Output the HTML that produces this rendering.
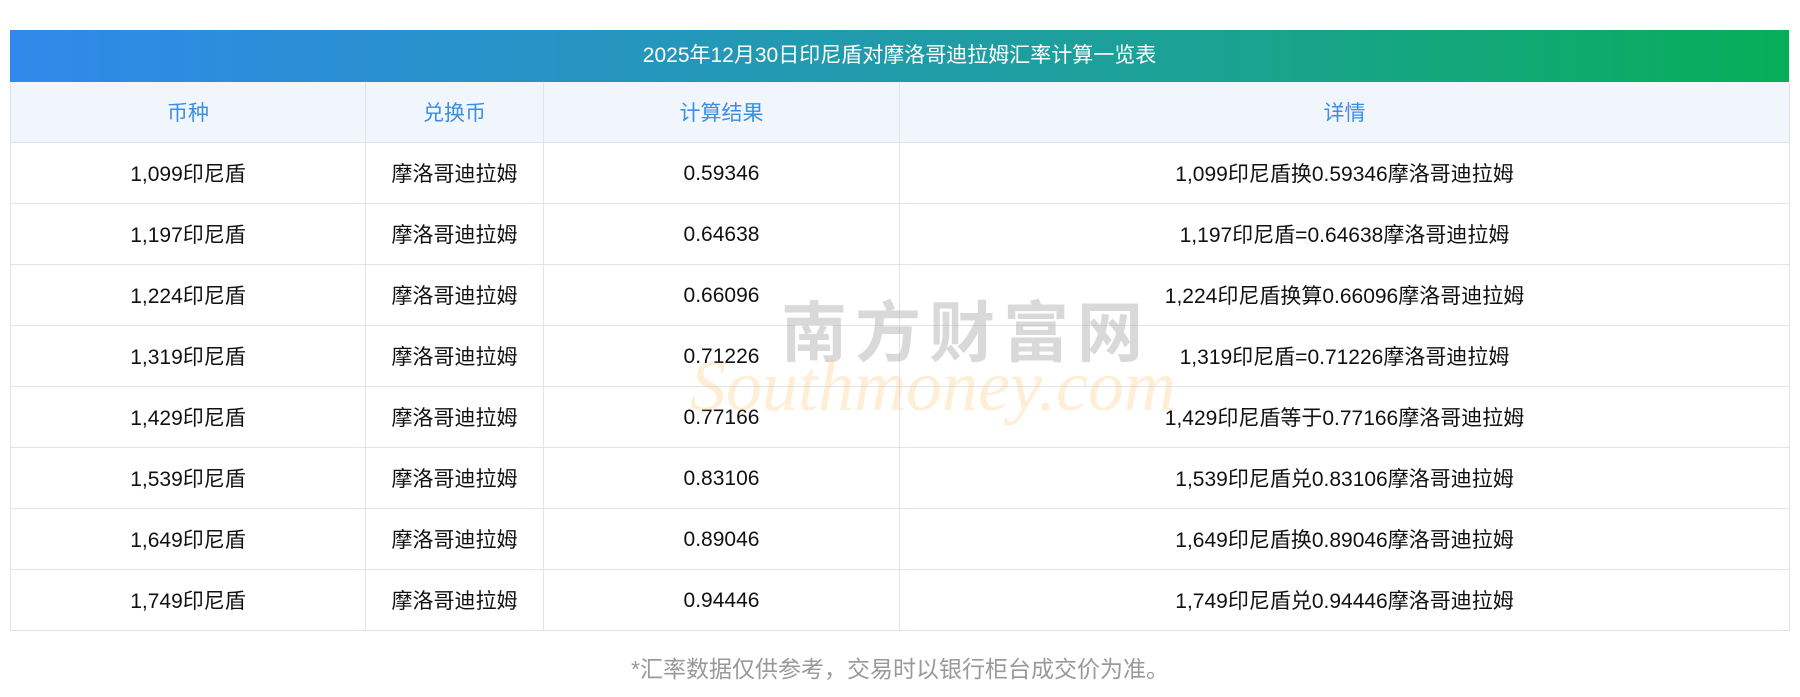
<!DOCTYPE html>
<html><head><meta charset="utf-8"><style>
body{margin:0;width:1800px;height:697px;background:#fff;font-family:"Liberation Sans","Noto Sans CJK SC",sans-serif;position:relative;overflow:hidden}
.t{position:absolute;left:10px;top:30px;width:1779px;height:52px;background:linear-gradient(90deg,#3089ec,#1aa38f 70%,#06ae58);color:#fff;font-size:21px;line-height:52px;text-align:center}
table{position:absolute;left:10px;top:82px;width:1780px;border-collapse:collapse;font-size:21px}
td,th{border:1px solid #dfe3ec;text-align:center;height:60px;padding:0;color:#111;font-weight:normal}
td:nth-child(3){padding-top:2px;height:58px}
th{background:#f1f6fd;color:#3a8ee6}
tr:first-child th{border-top:none}
.f{position:absolute;top:650px;width:1800px;text-align:center;color:#999;font-size:23px}
.w1{position:absolute;left:781px;top:280px;font-size:66px;color:rgba(170,170,170,.45);letter-spacing:8px;font-weight:bold;font-family:"Noto Sans CJK SC",sans-serif}
.w2{position:absolute;left:690px;top:345px;font-size:72px;font-style:italic;font-family:"Liberation Serif",serif;color:rgba(252,200,120,.3)}
</style></head><body>
<div class="t">2025年12月30日印尼盾对摩洛哥迪拉姆汇率计算一览表</div>
<table>
<colgroup><col style="width:355px"><col style="width:178px"><col style="width:356px"><col></colgroup>
<tr><th>币种</th><th>兑换币</th><th>计算结果</th><th>详情</th></tr>
<tr><td>1,099印尼盾</td><td>摩洛哥迪拉姆</td><td>0.59346</td><td>1,099印尼盾换0.59346摩洛哥迪拉姆</td></tr>
<tr><td>1,197印尼盾</td><td>摩洛哥迪拉姆</td><td>0.64638</td><td>1,197印尼盾=0.64638摩洛哥迪拉姆</td></tr>
<tr><td>1,224印尼盾</td><td>摩洛哥迪拉姆</td><td>0.66096</td><td>1,224印尼盾换算0.66096摩洛哥迪拉姆</td></tr>
<tr><td>1,319印尼盾</td><td>摩洛哥迪拉姆</td><td>0.71226</td><td>1,319印尼盾=0.71226摩洛哥迪拉姆</td></tr>
<tr><td>1,429印尼盾</td><td>摩洛哥迪拉姆</td><td>0.77166</td><td>1,429印尼盾等于0.77166摩洛哥迪拉姆</td></tr>
<tr><td>1,539印尼盾</td><td>摩洛哥迪拉姆</td><td>0.83106</td><td>1,539印尼盾兑0.83106摩洛哥迪拉姆</td></tr>
<tr><td>1,649印尼盾</td><td>摩洛哥迪拉姆</td><td>0.89046</td><td>1,649印尼盾换0.89046摩洛哥迪拉姆</td></tr>
<tr><td>1,749印尼盾</td><td>摩洛哥迪拉姆</td><td>0.94446</td><td>1,749印尼盾兑0.94446摩洛哥迪拉姆</td></tr>
</table>
<div class="w1">南方财富网</div>
<div class="w2">Southmoney.com</div>
<div class="f">*汇率数据仅供参考，交易时以银行柜台成交价为准。</div>
</body></html>
